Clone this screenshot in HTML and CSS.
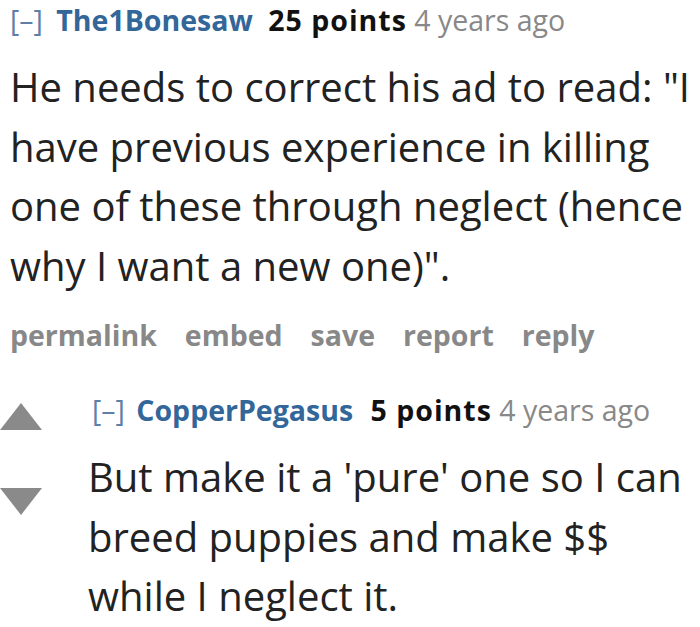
FILE: index.html
```html
<!DOCTYPE html>
<html>
<head>
<meta charset="utf-8">
<link rel="stylesheet" href="styles.css">
</head>
<body>
<div class="comment">
  <div class="tagline">
    <span class="expand">[–]</span>
    <span class="author">The1Bonesaw</span>
    <span class="score">25 points</span>
    <span class="time">4 years ago</span>
  </div>
  <div class="md">He needs to correct his ad to read: "I have previous experience in killing one of these through neglect (hence why I want a new one)".</div>
  <ul class="buttons">
    <li>permalink</li>
    <li>embed</li>
    <li>save</li>
    <li>report</li>
    <li>reply</li>
  </ul>
</div>
<div class="child">
  <div class="midcol">
    <div class="arrow up"></div>
    <div class="arrow down"></div>
  </div>
  <div class="entry">
    <div class="tagline">
      <span class="expand">[–]</span>
      <span class="author">CopperPegasus</span>
      <span class="score">5 points</span>
      <span class="time">4 years ago</span>
    </div>
    <div class="md">But make it a 'pure' one so I can breed puppies and make $$ while I neglect it.</div>
  </div>
</div>
</body>
</html>
```
FILE: styles.css
```css
html, body {
  margin: 0;
  padding: 0;
  background: #fff;
}
body {
  font-family: "Open Sans", "Noto Sans", sans-serif;
  color: #222;
  width: 700px;
  overflow: hidden;
}
.comment {
  padding: 0 0 0 10px;
}
.tagline {
  font-size: 28.5px;
  line-height: 40px;
  white-space: nowrap;
}
.expand {
  color: #5f7fa8;
  font-weight: 400;
  margin-right: 6px;
}
.author {
  color: #336699;
  font-weight: 700;
  margin-right: 8px;
}
.score {
  color: #111;
  font-weight: 700;
  letter-spacing: 1px;
}
.child .author {
  margin-right: 10px;
}
.child .expand {
  margin-right: 4px;
}
.time {
  color: #888;
}
.md {
  font-size: 40px;
  line-height: 59.5px;
  color: #222;
}
.comment .md {
  margin-top: 17px;
  width: 690px;
}
.buttons {
  list-style: none;
  margin: 21px 0 0 0;
  padding: 0;
  display: flex;
  gap: 28px;
  font-size: 28.5px;
  font-weight: 700;
  color: #888;
}
.child {
  display: flex;
  margin-top: 36px;
}
.midcol {
  width: 88px;
  flex: none;
  display: flex;
  flex-direction: column;
  padding-top: 13px;
}
.arrow {
  width: 0;
  height: 0;
  border-left: 21px solid transparent;
  border-right: 21px solid transparent;
}
.arrow.up {
  border-bottom: 27px solid #8a8a8a;
}
.arrow.down {
  border-top: 27px solid #8a8a8a;
  margin-top: 58px;
}
.child .tagline {
  padding-left: 4px;
}
.child .md {
  margin-top: 17px;
  width: 600px;
}
```
